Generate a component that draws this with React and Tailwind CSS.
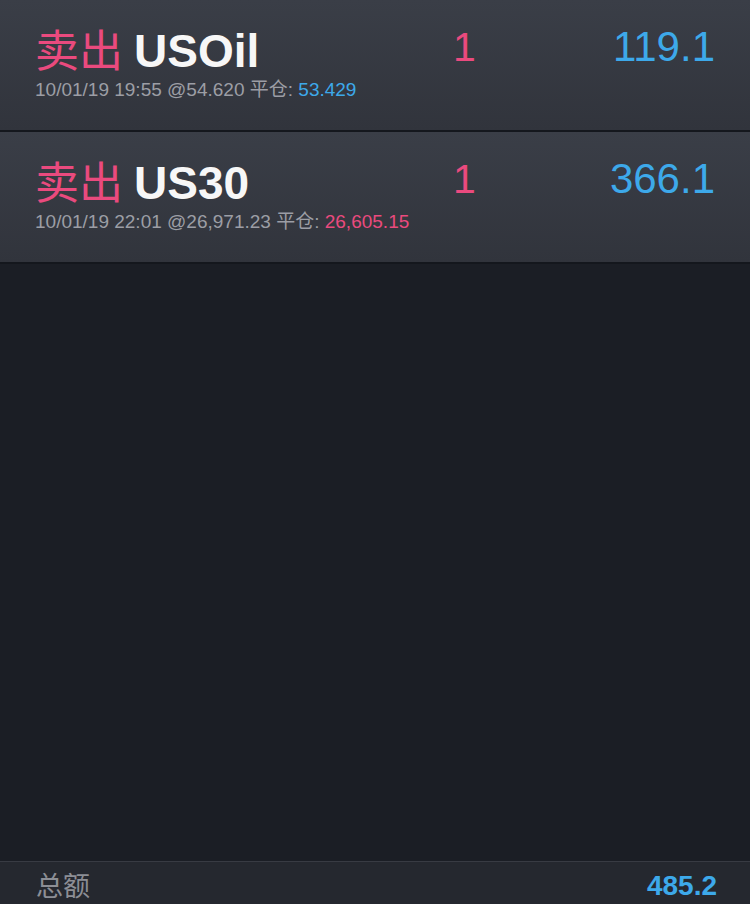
import React from "react";

const FONT = { fontFamily: '"Liberation Sans", "Noto Sans CJK SC", sans-serif' };

function Row({ symbol, meta, close, closeColor, qty, value }) {
  return (
    <div className="h-[132px] shrink-0 border-b-2 border-[#14171d] bg-gradient-to-b from-[#3a3e47] to-[#31343c] flex items-start pl-[35px] pr-[35px]">
      <div className="w-[418px] shrink-0 flex flex-col pt-[21px]">
        <div className="flex items-baseline h-[54px]">
          <span className="text-[44px] leading-[54px] text-[#ea4a7e] font-normal" style={{ fontFamily: '"Noto Sans CJK SC", sans-serif' }}>
            卖出
          </span>
          <span className="ml-[11px] text-[46px] leading-[54px] font-bold text-[#f7f7f7]">{symbol}</span>
        </div>
        <div className="mt-[4px] text-[19px] leading-[22px] text-[#9c9ea5] whitespace-nowrap">
          {meta} 平仓: <span className={closeColor}>{close}</span>
        </div>
      </div>
      <div className="pt-[27px] text-[41px] leading-none text-[#ea4a7e]">{qty}</div>
      <div className="ml-auto pt-[26px] text-[42px] leading-none text-[#3da9ea]">{value}</div>
    </div>
  );
}

export default function App() {
  return (
    <div className="w-full h-[904px] bg-[#1b1e25] flex flex-col overflow-hidden" style={FONT}>
      <Row
        symbol="USOil"
        meta="10/01/19 19:55 @54.620"
        close="53.429"
        closeColor="text-[#3da9ea]"
        qty="1"
        value="119.1"
      />
      <Row
        symbol="US30"
        meta="10/01/19 22:01 @26,971.23"
        close="26,605.15"
        closeColor="text-[#ea4a7e]"
        qty="1"
        value="366.1"
      />
      <div className="mt-auto h-[43px] shrink-0 border-t border-[#383b43] bg-[#25282f] flex items-start pl-[36px] pr-[33px]">
        <div className="pt-[6px] text-[27px] leading-[34px] text-[#8c8e95]" style={{ fontFamily: '"Noto Sans CJK SC", sans-serif' }}>
          总额
        </div>
        <div className="ml-auto pt-[10px] text-[28px] leading-none font-bold text-[#3da9ea]">485.2</div>
      </div>
    </div>
  );
}
